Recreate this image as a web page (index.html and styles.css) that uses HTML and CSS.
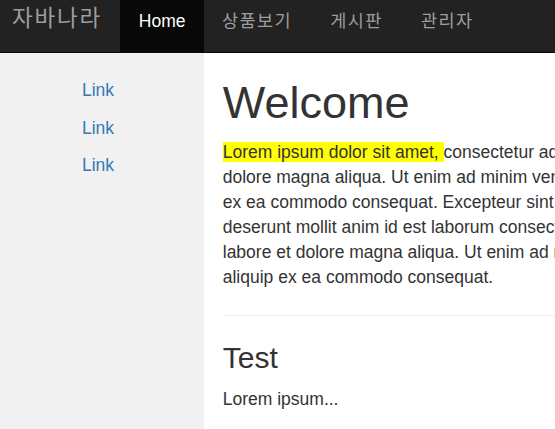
FILE: index.html
```html
<!DOCTYPE html>
<html lang="ko">
<head>
<meta charset="utf-8">
<title>자바나라</title>
<link rel="stylesheet" href="styles.css">
</head>
<body>
<nav class="navbar">
  <a class="brand ko" href="#">자바나라</a>
  <ul class="nav">
    <li class="active"><a href="#">Home</a></li>
    <li><a class="ko" href="#">상품보기</a></li>
    <li><a class="ko" href="#">게시판</a></li>
    <li><a class="ko" href="#">관리자</a></li>
  </ul>
</nav>
<div class="page">
  <aside class="sidenav">
    <p><a href="#">Link</a></p>
    <p><a href="#">Link</a></p>
    <p><a href="#">Link</a></p>
  </aside>
  <main class="content">
    <h1>Welcome</h1>
    <p><mark class="hl">Lorem ipsum dolor sit amet, </mark>consectetur adipiscing elit, sed do eiusmod tempor incididunt ut labore et dolore magna aliqua. Ut enim ad minim veniam, quis nostrud exercitation ullamco laboris nisi ut aliquip ex ea commodo consequat. Excepteur sint occaecat cupidatat non proident, sunt in culpa qui officia deserunt mollit anim id est laborum consectetur adipiscing elit, sed do eiusmod tempor incididunt ut labore et dolore magna aliqua. Ut enim ad minim veniam, quis nostrud exercitation ullamco laboris nisi ut aliquip ex ea commodo consequat.</p>
    <hr class="divider">
    <h3>Test</h3>
    <p>Lorem ipsum...</p>
  </main>
</div>
</body>
</html>
```

FILE: styles.css
```css
html, body {
  margin: 0;
  padding: 0;
  overflow: hidden;
  background: #fff;
}

body {
  font-family: "Liberation Sans", Arial, "Noto Sans CJK KR", sans-serif;
  font-size: 17.5px;
  line-height: 25px;
  color: #333;
}

a {
  text-decoration: none;
}

.navbar {
  display: flex;
  align-items: stretch;
  height: 52px;
  background: #222;
  border-bottom: 1px solid #080808;
}

.brand {
  display: block;
  padding: 6px 18px 0 12px;
  font-size: 22.5px;
  line-height: 25px;
  color: #9d9d9d;
}

.ko {
  letter-spacing: 0.08em;
}

.nav {
  display: flex;
  margin: 0;
  padding: 0;
  list-style: none;
}

.nav li a {
  display: block;
  height: 52px;
  box-sizing: border-box;
  padding: 9px 18.75px 0;
  line-height: 25px;
  color: #9d9d9d;
}

.nav li a.ko {
  padding-left: 17.75px;
  padding-right: 20.5px;
}

.nav li.active a {
  background: #080808;
  color: #fff;
}

.page {
  display: flex;
  min-height: calc(100vh - 53px);
}

.sidenav {
  flex: 0 0 204px;
  box-sizing: border-box;
  padding: 25px 8px 0 0;
  background: #f1f1f1;
  text-align: center;
}

.sidenav p {
  margin: 0 0 12.5px;
}

.sidenav a {
  color: #337ab7;
}

.content {
  flex: 0 0 813px;
  padding: 0 18.75px;
}

.content h1 {
  margin: 25px 0 12.5px;
  font-size: 45px;
  font-weight: 500;
  line-height: 1.1;
}

.content h3 {
  margin: 25px 0 12.5px;
  font-size: 30px;
  font-weight: 500;
  line-height: 1.1;
}

.content p {
  margin: 0 0 12.5px;
}

.hl {
  background: #ffff00;
  color: #333;
}

.divider {
  margin: 25px 0;
  border: 0;
  border-top: 1px solid #eee;
}
```
